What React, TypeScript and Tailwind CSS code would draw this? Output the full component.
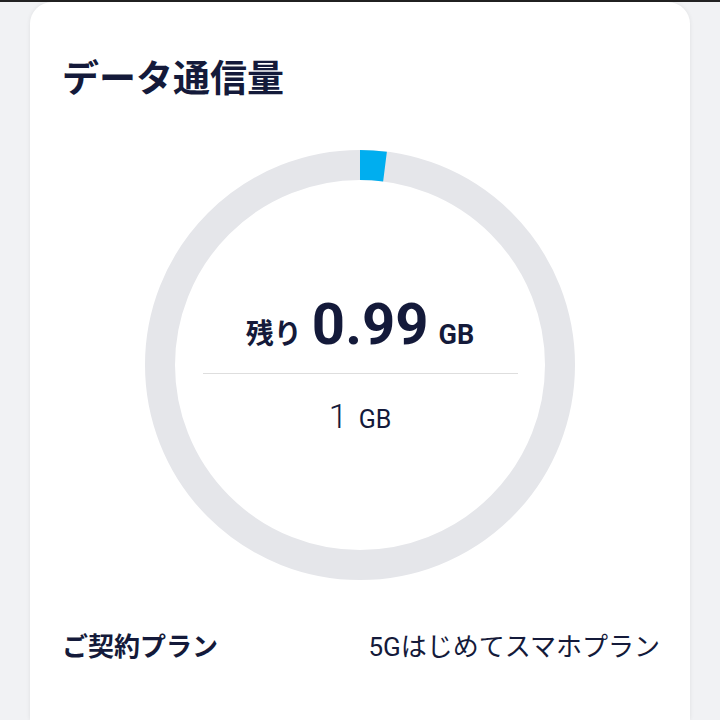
const font = { fontFamily: "Roboto, 'Noto Sans CJK JP', sans-serif" };

function UsageRing({ used, total }: { used: number; total: number }) {
  const r = 200;
  const c = 2 * Math.PI * r;
  const frac = Math.max(used / total, 0.02);
  return (
    <svg width="430" height="430" viewBox="0 0 430 430" className="absolute inset-0">
      <circle cx="215" cy="215" r={r} fill="none" stroke="#e5e6ea" strokeWidth="30" />
      <circle
        cx="215"
        cy="215"
        r={r}
        fill="none"
        stroke="#00aeef"
        strokeWidth="30"
        strokeDasharray={`${c * frac} ${c}`}
        transform="rotate(-90 215 215)"
      />
    </svg>
  );
}

export default function App() {
  return (
    <div className="min-h-screen bg-[#f1f2f4] border-t-2 border-[#222222]" style={font}>
      <div className="mx-[30px] bg-white rounded-t-[22px] shadow-[0_0_4px_rgba(0,0,0,0.08)] h-[718px] px-8 pt-[54px]">
        <h1 className="text-[37px] font-bold text-[#141a3a] leading-[48px]">データ通信量</h1>

        <div className="relative w-[430px] h-[430px] mx-auto mt-[46px]">
          <UsageRing used={0.01} total={1} />
          <div className="absolute inset-0 flex flex-col items-center pt-[145px] text-[#141a3a]">
            <div className="flex items-baseline gap-[10px]">
              <span className="text-[28px] font-bold leading-none">残り</span>
              <span className="text-[58px] font-bold leading-none">0.99</span>
              <span className="text-[27px] font-bold leading-none">GB</span>
            </div>
            <div className="w-[315px] border-t border-[#dedede] mt-[20px]" />
            <div className="flex items-baseline gap-[11px] mt-[25px]">
              <span className="text-[34px] font-light leading-none">1</span>
              <span className="text-[25px] leading-none">GB</span>
            </div>
          </div>
        </div>

        <div className="flex justify-between items-center mt-[48px] text-[#141a3a]">
          <span className="text-[26px] font-bold">ご契約プラン</span>
          <span className="text-[26px] mr-[-2px]">5Gはじめてスマホプラン</span>
        </div>
      </div>
    </div>
  );
}
